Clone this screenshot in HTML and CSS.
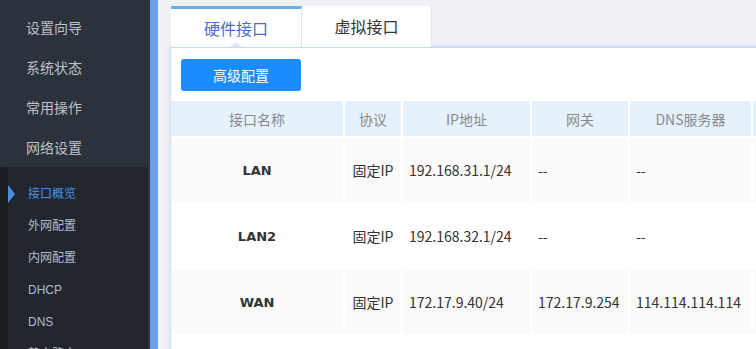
FILE: index.html
```html
<!DOCTYPE html>
<html lang="zh-CN">
<head>
    <meta charset="UTF-8">
    <meta name="viewport" content="width=device-width, initial-scale=1.0">
    <title>接口概览</title>
    <link rel="stylesheet" href="styles.css">
</head>
<body>
    <div class="sidebar">
        <ul class="menu">
            <li>设置向导</li>
            <li>系统状态</li>
            <li>常用操作</li>
            <li>网络设置</li>
        </ul>
        <ul class="submenu">
            <li class="active">接口概览</li>
            <li>外网配置</li>
            <li>内网配置</li>
            <li>DHCP</li>
            <li>DNS</li>
            <li>静态路由</li>
        </ul>
    </div>
    <div class="divider"></div>

    <div class="main">
        <div class="tabs">
            <div class="tab active">硬件接口</div>
            <div class="tab">虚拟接口</div>
        </div>

        <div class="panel">
            <div class="toolbar">
                <button type="button" class="btn">高级配置</button>
            </div>
            <table class="grid">
                <colgroup>
                    <col style="width: 172px">
                    <col style="width: 56px">
                    <col style="width: 127px">
                    <col style="width: 96px">
                    <col style="width: 121px">
                    <col style="width: 200px">
                </colgroup>
                <thead>
                    <tr>
                        <th>接口名称</th>
                        <th>协议</th>
                        <th>IP地址</th>
                        <th>网关</th>
                        <th>DNS服务器</th>
                        <th></th>
                    </tr>
                </thead>
                <tbody>
                    <tr>
                        <td class="name">LAN</td>
                        <td class="proto">固定IP</td>
                        <td>192.168.31.1/24</td>
                        <td>--</td>
                        <td>--</td>
                        <td></td>
                    </tr>
                    <tr>
                        <td class="name">LAN2</td>
                        <td class="proto">固定IP</td>
                        <td>192.168.32.1/24</td>
                        <td>--</td>
                        <td>--</td>
                        <td></td>
                    </tr>
                    <tr>
                        <td class="name">WAN</td>
                        <td class="proto">固定IP</td>
                        <td>172.17.9.40/24</td>
                        <td>172.17.9.254</td>
                        <td>114.114.114.114</td>
                        <td></td>
                    </tr>
                </tbody>
            </table>
        </div>
    </div>
</body>
</html>
```

FILE: styles.css
```css
body {
  margin: 0;
  width: 756px;
  height: 349px;
  overflow: hidden;
  display: flex;
  background: #eff1f5;
  font-family: "Noto Sans CJK SC", sans-serif;
}

ul {
  list-style-type: none;
  margin: 0;
  padding: 0;
}

/* sidebar */
.sidebar {
  width: 150px;
  flex-shrink: 0;
  background: #2b323c;
}

.menu {
  padding-top: 7px;
}

.menu li {
  height: 40px;
  line-height: 40px;
  padding-left: 26px;
  font-size: 14px;
  color: #bdc1c8;
}

.submenu {
  width: 148px;
  height: 182px;
  padding-top: 11px;
  border-left: 8px solid #1b1f24;
  background: #22272e;
  box-sizing: border-box;
  overflow: hidden;
}

.submenu li {
  position: relative;
  height: 32px;
  line-height: 32px;
  padding-left: 20px;
  font-family: "Liberation Sans", "Noto Sans CJK SC", sans-serif;
  font-size: 12px;
  color: #b3bccf;
}

.submenu li.active {
  color: #4a90e2;
}

.submenu li.active::before {
  content: "";
  position: absolute;
  left: 0;
  top: 7px;
  border-left: 7px solid #4a90e2;
  border-top: 9px solid transparent;
  border-bottom: 9px solid transparent;
}

.divider {
  width: 8px;
  flex-shrink: 0;
  background: #6c9ff0;
}

/* main */
.main {
  flex: 1;
  padding: 6px 0 0 12px;
  min-width: 0;
}

.tabs {
  display: flex;
  margin-left: 1px;
}

.tab {
  width: 130px;
  height: 41px;
  line-height: 41px;
  text-align: center;
  background: #fff;
  font-size: 16px;
  color: #333;
  border-right: 1px solid #e2e7ef;
  box-sizing: border-box;
}

.tab.active {
  position: relative;
  width: 131px;
  color: #4a6ed0;
  border-top: 3px solid #63aff2;
  line-height: 38px;
}

.tab.active::after {
  content: "";
  position: absolute;
  left: 59px;
  bottom: 0;
  border-bottom: 5px solid #e3e7ee;
  border-left: 6px solid transparent;
  border-right: 6px solid transparent;
}

.panel {
  width: 800px;
  height: 320px;
  background: #fff;
  border-top: 1px solid #c8d7f6;
  border-left: 1px solid #d3def8;
  box-shadow: 0 -1px 4px rgba(110, 150, 230, 0.25);
}

.toolbar {
  padding: 11px 10px 10px;
}

.btn {
  width: 120px;
  height: 32px;
  border: none;
  border-radius: 3px;
  background: #1a8cff;
  color: #fff;
  font-family: "Noto Sans CJK SC", sans-serif;
  font-size: 14px;
  cursor: pointer;
}

.grid {
  table-layout: fixed;
  border-collapse: separate;
  border-spacing: 2px;
  margin: -2px 0 0 -2px;
  font-size: 14px;
}

.grid th {
  height: 35px;
  padding: 0;
  background: #e5f1fb;
  font-weight: normal;
  color: #8a8a8a;
}

.grid td {
  height: 64px;
  padding: 0 6px;
  color: #333;
  white-space: nowrap;
}

.grid tbody tr:nth-child(odd) td {
  background: #fafafa;
}

.grid td.name {
  text-align: center;
  font-family: "DejaVu Sans", sans-serif;
  font-size: 13px;
  font-weight: bold;
}

.grid td.proto {
  padding: 0;
  text-align: center;
}
```
